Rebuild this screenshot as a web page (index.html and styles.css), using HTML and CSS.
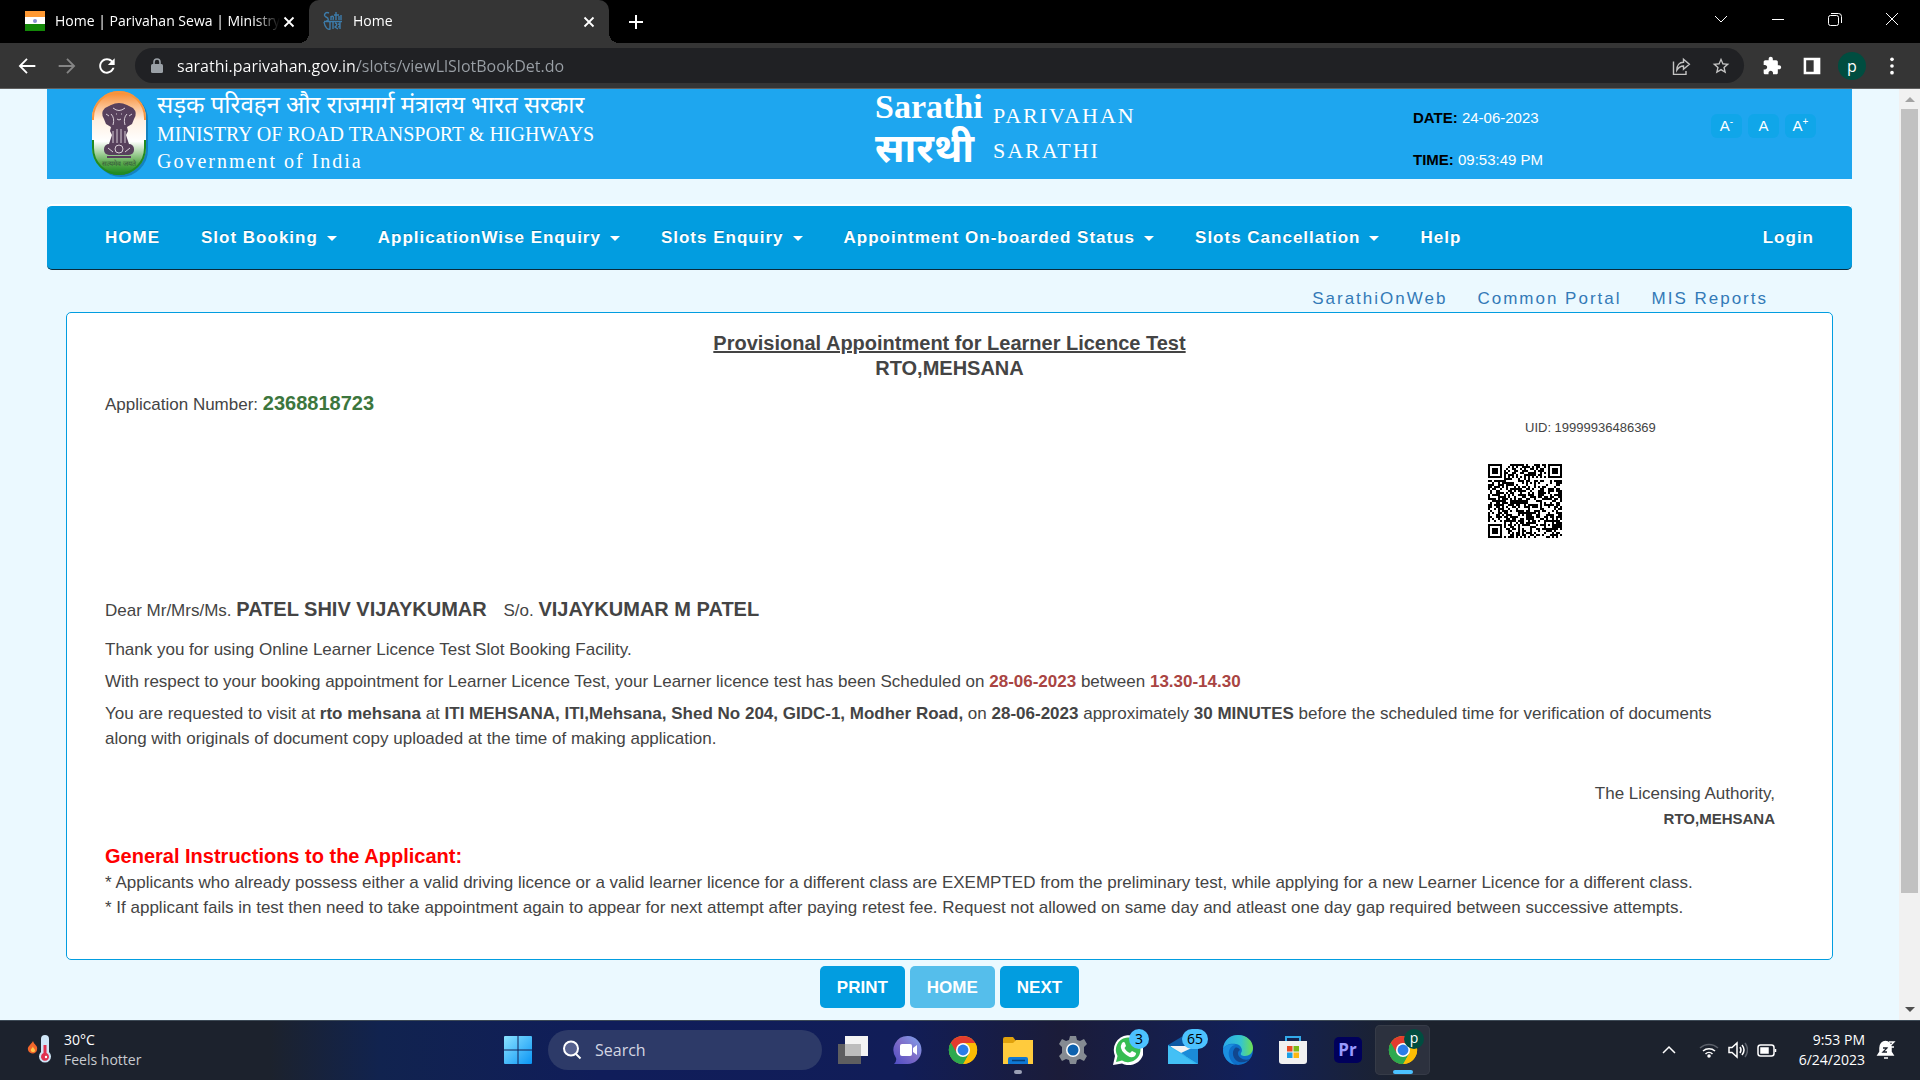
FILE: index.html
```html
<!DOCTYPE html>
<html lang="en">
<head>
<meta charset="utf-8">
<title>Home</title>
<link rel="stylesheet" href="styles.css">
</head>
<body>
<svg class="defs" aria-hidden="true">
  <symbol id="chrome" viewBox="0 0 32 32">
    <circle cx="16" cy="16" r="15" fill="#fbbc04"/>
    <path d="M16 16L3 8.500A15 15 0 0 1 29 8.500z" fill="#e33b2e"/>
    <path d="M3 8.500A15 15 0 0 0 16 31L22.500 19.500L16 16z" fill="#2da94f"/>
    <path d="M16 8.500h13A15 15 0 0 1 16 31l6.500-11z" fill="#fbbc04"/>
    <path d="M3 8.500L9.500 19.700L16 16V8.500z" fill="#e33b2e"/>
    <path d="M3 8.500A15 15 0 0 0 16 31L22.500 19.500A7.500 7.500 0 0 1 9.500 19.700z" fill="#2da94f"/>
    <circle cx="16" cy="16" r="7.500" fill="#fff"/>
    <circle cx="16" cy="16" r="5.800" fill="#2b7de9"/>
  </symbol>
  <symbol id="cross" viewBox="0 0 12 12"><path d="M1.500 1.500l9 9M10.500 1.500l-9 9" fill="none" stroke="currentColor" stroke-width="1.800"/></symbol>
</svg>

<header class="browser">
  <div class="tabs">
    <div class="tab">
      <svg class="favicon" viewBox="0 0 20 20"><path fill="#ff9933" d="M0 0h20v7H0z"/><path fill="#fff" d="M0 6h20v8H0z"/><path fill="#138808" d="M0 13h20v7H0z"/><circle cx="10" cy="10" r="2" fill="#8a8fd0"/></svg>
      <span class="tab-title">Home | Parivahan Sewa | Ministry</span>
      <button class="tab-close" aria-label="Close tab"><svg><use href="#cross"/></svg></button>
    </div>
    <div class="tab active">
      <svg class="favicon" viewBox="0 0 20 20" fill="none" stroke="#3d7cab" stroke-width="1.400"><path d="M6 2C2 0 0 5 3 6s3 4 0 4M8 5v4M8 6c2-2 3 0 2 3M13 1v8M11 4h5M16 5v4M18 4v5M1 11c1 6 4 8 6 7V11M1 10.500h18M10 11v7M12 12c4 1 0 4 0 4l3 2M17 11v7M15 13c3 0 2 3 0 3"/></svg>
      <span class="tab-title">Home</span>
      <button class="tab-close" aria-label="Close tab"><svg><use href="#cross"/></svg></button>
    </div>
    <button class="new-tab" aria-label="New tab"><svg viewBox="0 0 16 16"><path d="M8 1v14M1 8h14" stroke="#fff" stroke-width="2"/></svg></button>
    <div class="window-controls">
      <button aria-label="Search tabs"><svg viewBox="0 0 16 16"><path d="M2 5l6 6 6-6"/></svg></button>
      <button aria-label="Minimize"><svg viewBox="0 0 16 16"><path d="M2 8.500h12"/></svg></button>
      <button aria-label="Restore"><svg viewBox="0 0 16 16"><rect x="1.500" y="4.500" width="10" height="10" rx="2"/><path d="M4 2.500h7.500a3 3 0 0 1 3 3V12"/></svg></button>
      <button aria-label="Close"><svg viewBox="0 0 16 16"><path d="M2 2l12 12M14 2L2 14"/></svg></button>
    </div>
  </div>
  <div class="toolbar">
    <button class="tool" aria-label="Back"><svg viewBox="0 0 24 24"><path d="M22 12H4M12 3.500L3.500 12l8.500 8.500" fill="none" stroke="#fff" stroke-width="2.200"/></svg></button>
    <button class="tool" aria-label="Forward"><svg viewBox="0 0 24 24"><path d="M2 12h18M12 3.500L20.500 12 12 20.500" fill="none" stroke="#858585" stroke-width="2.200"/></svg></button>
    <button class="tool" aria-label="Reload"><svg viewBox="0 0 24 24"><path fill="#fff" d="M17.650 6.350C16.200 4.900 14.210 4 12 4c-4.420 0-7.990 3.580-7.990 8s3.570 8 7.990 8c3.730 0 6.840-2.550 7.730-6h-2.080c-.82 2.330-3.040 4-5.650 4-3.310 0-6-2.690-6-6s2.690-6 6-6c1.660 0 3.140.69 4.220 1.780L13 11h7V4l-2.350 2.350z" transform="translate(-2 -2) scale(1.160)"/></svg></button>
    <div class="omnibox">
      <svg class="lock" viewBox="0 0 12 16"><rect y="6" width="12" height="9" rx="1.500" fill="#9aa0a6"/><path d="M3 7V4a3 3 0 0 1 6 0v3" fill="none" stroke="#9aa0a6" stroke-width="1.600"/></svg>
      <input class="url" type="text" aria-label="Address" value="sarathi.parivahan.gov.in/slots/viewLlSlotBookDet.do">
      <button class="tool" aria-label="Share"><svg viewBox="0 0 24 24" fill="none" stroke="#c4c4c4" stroke-width="1.700"><path d="M3 6.500V22h15v-4M7 17c0-6 3-9.500 8-9.500V4l7 6-7 6v-4c-4 0-6 1.500-8 5z"/></svg></button>
      <button class="tool" aria-label="Bookmark"><svg viewBox="0 0 24 24"><path fill="#c4c4c4" d="M22 9.240l-7.190-.62L12 2 9.190 8.630 2 9.240l5.460 4.730L5.820 21 12 17.270 18.180 21l-1.630-7.030L22 9.240zM12 15.400l-3.760 2.270 1-4.280-3.320-2.880 4.380-.38L12 6.100l1.710 4.040 4.380.38-3.320 2.880 1 4.280L12 15.400z"/></svg></button>
    </div>
    <button class="tool" aria-label="Extensions"><svg viewBox="0 0 24 24"><path fill="#fff" d="M20.500 11H19V7c0-1.100-.9-2-2-2h-4V3.500C13 2.120 11.880 1 10.500 1S8 2.120 8 3.500V5H4c-1.100 0-1.990.9-1.990 2v3.800H3.500c1.490 0 2.700 1.210 2.700 2.700s-1.210 2.700-2.700 2.700H2V20c0 1.100.9 2 2 2h3.800v-1.500c0-1.490 1.210-2.700 2.700-2.700 1.490 0 2.700 1.210 2.700 2.700V22H17c1.100 0 2-.9 2-2v-4h1.500c1.380 0 2.500-1.120 2.500-2.500S21.880 11 20.500 11z"/></svg></button>
    <button class="tool" aria-label="Side panel"><svg viewBox="0 0 24 24"><path fill="#fff" fill-rule="evenodd" d="M2 2h20v20H2zM5 5v14h9V5z"/></svg></button>
    <button class="tool avatar" aria-label="Profile">p</button>
    <button class="tool" aria-label="Menu"><svg viewBox="0 0 24 24" fill="#fff"><circle cx="12" cy="4" r="2.200"/><circle cx="12" cy="12" r="2.200"/><circle cx="12" cy="20" r="2.200"/></svg></button>
  </div>
</header>

<div class="viewport">
  <div class="page">
    <div class="banner">
      <div class="ministry">
        <svg class="emblem" viewBox="0 0 58 88">
          <defs><linearGradient id="tri" x1="0" y1="0" x2="0" y2="1"><stop offset="0" stop-color="#f7872a"/><stop offset=".35" stop-color="#fff0e2"/><stop offset=".6" stop-color="#fff"/><stop offset=".85" stop-color="#5dac50"/><stop offset="1" stop-color="#17851c"/></linearGradient></defs>
          <rect x="3" y="3" width="54" height="84" rx="27" fill="#0c5d8e" opacity=".5"/>
          <rect x="1" y="1" width="54" height="84" rx="27" fill="url(#tri)"/>
          <path d="M2 30V28a26 26 0 0 1 52 0v2" fill="none" stroke="#f7953e" stroke-width="2"/>
          <path d="M2 50v8a26 26 0 0 0 52 0v-8" fill="none" stroke="#228b22" stroke-width="2"/>
          <g fill="#57405c"><path d="M20 15q8-4 16 0l6 3q5 5 1 11l-2 5-5 3 1 4-2 4 3 9H18l3-9-2-4 1-4-5-3-2-5q-4-6 1-11z"/><rect x="13" y="54" width="30" height="11" rx="5"/><path d="M16 66h24v2H16z"/></g>
          <g fill="none" stroke="#d8cdd7" stroke-width="1"><path d="M22 18q6 5 12 0M20 24q4 4 2 11M36 24q-4 4-2 11M25 24h1M30 24h1M26 29q2 2 4 0M15 24l3 2M41 24l-3 2M22 41v12M26 39v14M30 39v14M34 41v12M17 58l5 4M34 62l5-4"/><circle cx="28" cy="59" r="4"/></g>
          <text x="28" y="76" font-size="7" text-anchor="middle" fill="#37523b">सत्यमेव जयते</text>
        </svg>
        <div class="ministry-text">
          <p class="hindi" lang="hi">सड़क परिवहन और राजमार्ग मंत्रालय भारत सरकार</p>
          <p>MINISTRY OF ROAD TRANSPORT &amp; HIGHWAYS</p>
          <p class="government">Government of India</p>
        </div>
      </div>
      <div class="sarathi">
        <div class="wordmark"><span>Sarathi</span><span class="wordmark-hindi" lang="hi">सारथी</span></div>
        <p class="product">PARIVAHAN<br>SARATHI</p>
      </div>
      <div class="clock">
        <p><b>DATE:</b> 24-06-2023</p>
        <p><b>TIME:</b> 09:53:49 PM</p>
      </div>
      <div class="text-size">
        <button aria-label="Smaller text">A<sup>-</sup></button>
        <button aria-label="Normal text">A</button>
        <button aria-label="Larger text">A<sup>+</sup></button>
      </div>
    </div>

    <nav class="menu">
      <a href="#">HOME</a>
      <a href="#" class="drop">Slot Booking</a>
      <a href="#" class="drop">ApplicationWise Enquiry</a>
      <a href="#" class="drop">Slots Enquiry</a>
      <a href="#" class="drop">Appointment On-boarded Status</a>
      <a href="#" class="drop">Slots Cancellation</a>
      <a href="#">Help</a>
      <a href="#" class="login">Login</a>
    </nav>

    <div class="portal-links">
      <a href="#">SarathiOnWeb</a>
      <a href="#">Common Portal</a>
      <a href="#">MIS Reports</a>
    </div>

    <main class="letter">
      <h1><u>Provisional Appointment for Learner Licence Test</u><br>RTO,MEHSANA</h1>
      <p class="application">Application Number: <strong>2368818723</strong></p>
      <div class="identity">
        <p class="uid">UID: 19999936486369</p>
        <svg class="qr" viewBox="0 0 37 37" role="img" aria-label="QR code" shape-rendering="crispEdges"><path id="qr-cells"/></svg>
      </div>
      <p class="salutation">Dear Mr/Mrs/Ms. <strong>PATEL SHIV VIJAYKUMAR</strong> <span class="parent">S/o. <strong>VIJAYKUMAR M PATEL</strong></span></p>
      <p>Thank you for using Online Learner Licence Test Slot Booking Facility.</p>
      <p>With respect to your booking appointment for Learner Licence Test, your Learner licence test has been Scheduled on <b class="slot">28-06-2023</b> between <b class="slot">13.30-14.30</b></p>
      <p>You are requested to visit at <b>rto mehsana</b> at <b>ITI MEHSANA, ITI,Mehsana, Shed No 204, GIDC-1, Modher Road,</b> on <b>28-06-2023</b> approximately <b>30 MINUTES</b> before the scheduled time for verification of documents<br>along with originals of document copy uploaded at the time of making application.</p>
      <p class="signature">The Licensing Authority,<br><b>RTO,MEHSANA</b></p>
      <h2>General Instructions to the Applicant:</h2>
      <p class="rules">* Applicants who already possess either a valid driving licence or a valid learner licence for a different class are EXEMPTED from the preliminary test, while applying for a new Learner Licence for a different class.<br>* If applicant fails in test then need to take appointment again to appear for next attempt after paying retest fee. Request not allowed on same day and atleast one day gap required between successive attempts.</p>
    </main>

    <div class="actions">
      <button>PRINT</button>
      <button class="hovered">HOME</button>
      <button>NEXT</button>
    </div>
  </div>
  <div class="scrollbar" aria-hidden="true">
    <i class="up"></i>
    <div class="track"><div class="thumb"></div></div>
    <i class="down"></i>
  </div>
</div>

<footer class="taskbar">
  <div class="weather">
    <svg viewBox="0 0 26 30"><path d="M6 7c-1 3-6 5-5 9s8 5 9 0-3-5-4-9z" fill="#f2662b"/><path d="M6 12c0 2-3 3-2 5s5 1 4-1-2-2-2-4z" fill="#ffc64a"/><path d="M14 5a4 4 0 0 1 8 0v13a6 6 0 1 1-8 0z" fill="#cfe6f7"/><path d="M16.500 11h3v8a4 4 0 1 1-3 0z" fill="#e0314f"/><circle cx="19" cy="23" r="1.200" fill="#fff"/></svg>
    <p>30°C<br><span>Feels hotter</span></p>
  </div>
  <div class="apps">
    <button class="app" aria-label="Start"><svg viewBox="0 0 30 30"><defs><linearGradient id="win" x1="0" y1="0" x2="1" y2="1"><stop offset="0" stop-color="#8be2ff"/><stop offset="1" stop-color="#0a95f5"/></linearGradient></defs><path fill="url(#win)" d="M1 2q0-1 1-1h12.500v13.500H1zM15.500 1H28q1 0 1 1v12.500H15.500zM1 15.500h13.500V29H2q-1 0-1-1zM15.500 15.500H29V28q0 1-1 1H15.500z"/></svg></button>
    <div class="search">
      <svg viewBox="0 0 20 20" fill="#56618f" stroke="#fff" stroke-width="2"><circle cx="9" cy="8.500" r="7"/><path d="M14 14l4.500 4.500"/></svg>
      <input type="search" placeholder="Search" aria-label="Search">
    </div>
    <button class="app" aria-label="Task view"><svg viewBox="0 0 30 30"><path fill="#5e5e60" d="M0 9h23v20H0z"/><path fill="#f3f3f3" d="M7 1h23v20H7z"/><path fill="#bdbdbd" d="M7 9h16v12H7z"/></svg></button>
    <button class="app" aria-label="Chat"><svg viewBox="0 0 30 30"><defs><linearGradient id="chat" x1="1" y1="0" x2="0" y2="1"><stop offset="0" stop-color="#7fa6f0"/><stop offset=".5" stop-color="#7f6cc8"/><stop offset="1" stop-color="#4d4cc4"/></linearGradient></defs><path fill="url(#chat)" d="M15 1a14 14 0 1 1-1 28H1q3-3 2-6A14 14 0 0 1 15 1z"/><rect x="7" y="9" width="12" height="12" rx="2" fill="#fff"/><path d="M20 13l4-3v10l-4-3z" fill="#fff"/></svg></button>
    <button class="app" aria-label="Chrome"><svg><use href="#chrome"/></svg></button>
    <button class="app open" aria-label="File Explorer"><svg viewBox="0 0 30 30"><path fill="#e0a10c" d="M0 4q0-2 2-2h8l3 4v6H0z"/><path fill="#ffcb3d" d="M0 8h10l3-3h17v24H0z"/><path fill="#0f78d4" d="M5 29v-5q0-2 2-2h16q2 0 2 2v5z"/><path stroke="#063e75" stroke-width="1.500" d="M9 25.500h13"/></svg></button>
    <button class="app" aria-label="Settings"><svg viewBox="0 0 30 30"><path d="M12 1h6l1 4 3 1 4-2 3 5-3 3v6l3 3-3 5-4-2-3 1-1 4h-6l-1-4-3-1-4 2-3-5 3-3v-6L1 9l3-5 4 2 3-1z" fill="#858b92"/><circle cx="15" cy="15" r="7" fill="#fff"/><circle cx="15" cy="15" r="5.500" fill="#0d62ae"/></svg></button>
    <button class="app" aria-label="WhatsApp"><svg viewBox="0 0 30 30"><path fill="#fff" d="M0 30l2-9A15 15 0 1 1 9 28.500z"/><path fill="#37bd52" d="M3 27l1.500-6A12.300 12.300 0 1 1 9 25.500z"/><path fill="#fff" d="M9 8q2-2 3 0l1 3-1.500 2q2 4 5.500 5l2-2 4 2q0 3-3 4-4 1-9-4T9 8z"/></svg><span class="badge">3</span></button>
    <button class="app" aria-label="Mail"><svg viewBox="0 0 30 30"><path fill="#0c59a4" d="M0 10L15 1l15 9v6H0z"/><path fill="#f2f2f2" d="M2 11h26L15 23z"/><path fill="#35b8f1" d="M0 10l30 18v1H0z"/><path fill="#1b8bd8" d="M30 10v19L13 18z"/><path fill="#43c0f5" d="M0 11v18h27L13 19z"/></svg><span class="badge wide">65</span></button>
    <button class="app" aria-label="Edge"><svg viewBox="0 0 30 30"><defs><linearGradient id="edge"><stop offset="0" stop-color="#2aa8e8"/><stop offset=".6" stop-color="#35c5cf"/><stop offset="1" stop-color="#6fe04f"/></linearGradient></defs><circle cx="15" cy="15" r="15" fill="#0e6fc9"/><path fill="url(#edge)" d="M0 14C1 4 8 0 15 0c9 0 15 6 15 13 0 5-4 8-8 8-3 0-5-1-4-3 2-2 1-8-5-9C7 8 2 10 0 14z"/><path fill="#11478f" d="M12 13c-4 4-2 12 4 14 5 1 9-1 11-3-6 2-12-1-12-6 0-2 2-3 2-3-1-2-3-3-5-2z"/><path fill="#1b8fe0" d="M0 14c2-4 8-6 13-4-6 0-8 6-7 11 1 4 4 8 7 9C5 29 0 22 0 14z"/></svg></button>
    <button class="app" aria-label="Microsoft Store"><svg viewBox="0 0 30 30"><path d="M8 7V2h14v5" fill="none" stroke="#32a9ea" stroke-width="2"/><path fill="#f1f1f1" d="M1 6h28v20q0 3-3 3H4q-3 0-3-3z"/><path fill="#e84b25" d="M9 11h5.500v5.500H9z"/><path fill="#7db817" d="M15.500 11H21v5.500h-5.500z"/><path fill="#1a9fe6" d="M9 17.500h5.500V23H9z"/><path fill="#fcb813" d="M15.500 17.500H21V23h-5.500z"/></svg></button>
    <button class="app" aria-label="Premiere Pro"><span class="premiere">Pr</span></button>
    <button class="app current" aria-label="Chrome, profile p"><svg><use href="#chrome"/></svg><span class="badge profile">p</span></button>
  </div>
  <div class="tray">
    <svg class="chevron" viewBox="0 0 20 20"><path d="M4 13l6-6 6 6"/></svg>
    <svg viewBox="0 0 20 20"><path d="M1 8a13 13 0 0 1 18 0" stroke="#5b606a"/><path d="M4 11a9 9 0 0 1 12 0M6.500 14a5 5 0 0 1 7 0"/><circle cx="10" cy="16" r="1" fill="#fff"/></svg>
    <svg viewBox="0 0 20 20"><path d="M1 7.500h3L9 3v14l-5-4.500H1zM12 7q2 3 0 6M14 5q4 5 0 10"/><path d="M17 3q5 7 0 14" stroke="#5b606a"/></svg>
    <svg viewBox="0 0 20 20"><rect x="1" y="5" width="16" height="11" rx="2.500"/><path d="M4 8h7v5H4z" fill="#fff"/><path d="M18.500 9v3"/></svg>
    <p class="time">9:53 PM<br>6/24/2023</p>
    <svg viewBox="0 0 20 20"><path d="M2 15h15l-2-3V8A5 6 0 0 0 4 8v4z" fill="#fff"/><path d="M8 18h4" /><path d="M7 8h4l-4 4h4" stroke="#1c222d" stroke-width="1.300"/><path d="M13 2h5l-5 5h5" stroke="#fff" stroke-width="1.300"/></svg>
  </div>
</footer>
<script src="qr.js"></script>
</body>
</html>
```
FILE: styles.css
```css
* { box-sizing: border-box; }
body { margin: 0; min-height: 100vh; display: flex; flex-direction: column; background: #ebf9ff; font-family: "Liberation Sans", Arial, sans-serif; font-size: 17px; line-height: 25px; color: #444; }
p, h1, h2 { margin: 0; }
a { text-decoration: none; }
button { font: inherit; color: inherit; background: none; border: 0; padding: 0; }
input { font: inherit; color: inherit; background: none; border: 0; padding: 0; min-width: 0; outline: 0; }
svg { display: block; flex: none; }
.defs { position: absolute; width: 0; height: 0; }

/* Browser window */
.browser, .taskbar { font-family: "Open Sans", "Noto Sans", sans-serif; color: #fff; }
.browser { background: #353535; border-bottom: 1px solid #606060; }
.tabs { display: flex; height: 43px; background: #000; }
.tab { display: flex; align-items: center; width: 309px; padding: 0 12px 8px 25px; font-size: 14px; }
.tab.active { position: relative; width: 300px; padding-left: 14px; background: #353535; border-radius: 10px 10px 0 0; }
.tab.active::before, .tab.active::after { content: ""; position: absolute; bottom: 0; width: 10px; height: 10px; }
.tab.active::before { left: -10px; background: radial-gradient(circle at 0 0, transparent 10px, #353535 10px); }
.tab.active::after { right: -10px; background: radial-gradient(circle at 100% 0, transparent 10px, #353535 10px); }
.favicon { width: 20px; height: 20px; margin-top: 6px; }
.tab-title { flex: 1; margin: 6px 1px 0 10px; overflow: hidden; white-space: nowrap; mask-image: linear-gradient(to left, transparent, #000 26px); }
.tab-close { width: 16px; height: 16px; padding: 2px; margin-top: 8px; }
.tab-close svg { width: 12px; height: 12px; }
.new-tab { width: 32px; padding: 0 8px; margin-left: 11px; }
.new-tab svg { width: 16px; height: 16px; }
.window-controls { display: flex; margin-left: auto; }
.window-controls button { width: 57px; display: grid; place-items: center; padding-bottom: 5px; }
.window-controls svg { width: 16px; height: 16px; fill: none; stroke: #fff; stroke-width: 1; }
.toolbar { display: flex; align-items: center; height: 45px; padding: 0 8px 0 7px; }
.tool { width: 40px; height: 34px; display: grid; place-items: center; flex: none; }
.tool svg { width: 20px; height: 20px; }
.omnibox { flex: 1; display: flex; align-items: center; height: 35px; margin: 0 8px; padding: 0 3px 0 16px; border-radius: 18px; background: #202124; }
.lock { width: 12px; height: 16px; margin: 0 10px 0 0; }
.url { flex: 1; margin-left: 4px; height: 26px; font-size: 16px; color: transparent; background: linear-gradient(to right, #fff 181px, #9aa0a6 181px); -webkit-background-clip: text; background-clip: text; }
.tool.avatar { width: 28px; height: 28px; margin: 0 6px; border-radius: 50%; background: #004d40; font-size: 16px; line-height: 22px; }

/* Page */
.viewport { flex: 1; display: flex; }
.page { flex: 1; padding: 0 47px; }
.banner { display: grid; grid-template-columns: 828px 538px 298px 1fr; height: 90px; background: #1ea6ef; color: #fff; }
.ministry { display: flex; padding: 1px 0 0 44px; gap: 8px; font-family: "Liberation Serif", "Times New Roman", serif; font-size: 20px; line-height: 27px; white-space: nowrap; }
.emblem { width: 58px; height: 88px; }
.ministry-text { padding-top: 4px; }
.hindi { font-family: "Noto Sans Devanagari", "Noto Sans", sans-serif; font-size: 24px; }
.government { letter-spacing: 2px; }
.sarathi { display: flex; gap: 11px; font-family: "Liberation Serif", "Times New Roman", serif; }
.wordmark { width: 107px; display: flex; flex-direction: column; font-size: 34px; font-weight: bold; line-height: 36px; }
.wordmark-hindi { font-family: "Noto Sans Devanagari", "Noto Sans", sans-serif; font-size: 40px; line-height: 54px; }
.product { padding-top: 9px; font-size: 22px; line-height: 35px; letter-spacing: 2px; }
.clock { padding-top: 8px; font-size: 15px; line-height: 42px; }
.clock b { color: #000; }
.text-size { display: flex; gap: 6px; padding-top: 25px; }
.text-size button { width: 31px; height: 24px; border-radius: 6px; background: #10a6e9; font-size: 15px; line-height: 24px; }
.text-size sup { font-size: 10px; line-height: 0; }

.menu { display: flex; align-items: center; gap: 41px; height: 66px; margin-top: 25px; padding: 0 38px 0 58px; border-top: 2px solid #fff; border-bottom: 1px solid #0a2a3a; border-radius: 5px; background: #029de0; }
.menu a { color: #fff; font-weight: bold; letter-spacing: 1px; white-space: nowrap; text-shadow: 0 -1px 0 rgba(0, 0, 0, .25); }
.drop::after { content: ""; display: inline-block; margin-left: 9px; vertical-align: 2px; border: 5px solid transparent; border-top-color: #fff; border-bottom: 0; }
.menu .login { margin-left: auto; }

.portal-links { display: flex; justify-content: flex-end; gap: 30px; padding: 16px 84px 1px 0; }
.portal-links a { color: #337ab7; letter-spacing: 2px; }

.letter { margin: 0 19px; padding: 18px 57px 39px 38px; border: 1px solid #029de0; border-radius: 5px; background: #fff; }
.letter p { margin-bottom: 7px; }
h1 { margin-right: -19px; font-size: 20px; line-height: 25px; text-align: center; }
.letter strong { font-size: 20px; }
.letter .application { margin: 10px 0 0; }
.application strong { color: #3c763d; }
.identity { display: flex; flex-direction: column; width: 287px; height: 180px; margin-left: auto; }
.letter .uid { margin: 0 0 25px 37px; font-size: 13px; line-height: 22px; }
.qr { width: 74px; height: 74px; }
.letter .salutation { margin-bottom: 14px; }
.parent { margin-left: 12px; }
.slot { color: #a94442; }
.letter .signature { margin: 30px 0 12px; text-align: right; }
.signature b { font-size: 15px; }
h2 { font-size: 20px; line-height: 27px; color: #f00; }
.letter .rules { margin-bottom: 0; }

.actions { display: flex; justify-content: center; gap: 5px; padding: 6px 0 10px; }
.actions button { height: 42px; padding: 0 17px; border-radius: 5px; background: #029de0; color: #fff; font-weight: bold; }
.actions .hovered { background: #55beeb; }

.scrollbar { width: 21px; display: flex; flex-direction: column; align-items: center; padding: 8px 0; background: #f1f1f1; }
.track { flex: 1; width: 17px; margin: 7px 0; }
.thumb { height: 88%; background: #c1c1c1; }
.up, .down { border: 5px solid transparent; }
.up { border-top: 0; border-bottom-color: #a3a3a3; }
.down { border-bottom: 0; border-top-color: #505050; }

/* Taskbar */
.taskbar { display: grid; grid-template-columns: 1fr auto 1fr; align-items: center; height: 60px; padding-bottom: 1px; border-top: 1px solid #3d4a56; font-size: 14px; line-height: 20px; background: linear-gradient(to right, #1c222d 270px, #11234f 380px, #101d5a 600px, #111d58 900px, #1b1c39 1060px, #11205a 1250px, #1c222d 1400px); }
.weather { display: flex; gap: 11px; padding-left: 27px; }
.weather svg { width: 26px; height: 30px; margin-top: 4px; }
.weather span { color: #c8cbd0; }
.apps { display: flex; align-items: center; }
.app { position: relative; display: grid; place-items: center; width: 55px; height: 50px; border-radius: 5px; }
.app svg { width: 30px; height: 30px; }
.current { background: #2c313e; box-shadow: inset 0 0 0 1px #363b47; }
.open::after, .current::after { content: ""; position: absolute; bottom: 1px; left: 50%; width: 8px; height: 4px; margin-left: -4px; border-radius: 2px; background: #9ba0b5; }
.current::after { width: 20px; margin-left: -10px; background: #4cc2ff; }
.badge { position: absolute; top: 4px; right: 6px; width: 20px; height: 20px; border-radius: 10px; background: #4cc2ff; color: #000; line-height: 20px; }
.badge.wide { right: 2px; width: 26px; }
.badge.profile { background: #004d40; color: #fff; line-height: 18px; }
.premiere { width: 28px; height: 26px; border-radius: 5px; background: #00005b; color: #9999ff; font-size: 17px; font-weight: bold; line-height: 26px; }
.search { display: flex; align-items: center; gap: 13px; width: 274px; height: 40px; margin: 0 3px; padding: 0 14px; border-radius: 20px; background: #2d3a68; }
.search svg { width: 20px; height: 20px; }
.search input { flex: 1; font-size: 16px; }
.search input::placeholder { color: #d3d6e2; }
.tray { display: flex; justify-content: flex-end; align-items: center; gap: 9px; padding-right: 24px; }
.tray svg { width: 20px; height: 20px; fill: none; stroke: #fff; stroke-width: 1.5; }
.tray .chevron { margin-right: 11px; }
.time { margin: 0 2px 0 13px; text-align: right; }
```
FILE: qr.js
```js
// Fills the 37 by 37 code: three finder squares, one alignment square, timing lines, data cells.
const SIZE = 37;
let seed = 236881;
const bit = () => {
  seed = (seed * 1103515245 + 12345) % 2147483648;
  return seed / 2147483648 < 0.52;
};
const ring = (x, y, cx, cy) => Math.max(Math.abs(x - cx), Math.abs(y - cy));
const finders = [[3, 3], [SIZE - 4, 3], [3, SIZE - 4]];
let d = "";
for (let y = 0; y < SIZE; y++) {
  for (let x = 0; x < SIZE; x++) {
    let on = bit();
    if (x === 6 || y === 6) on = (x + y) % 2 === 0;
    const a = ring(x, y, 30, 30);
    if (a < 3) on = a !== 1;
    for (const [cx, cy] of finders) {
      const r = ring(x, y, cx, cy);
      if (r < 5) on = r < 2 || r === 3;
    }
    if (on) d += `M${x} ${y}h1v1h-1z`;
  }
}
document.getElementById("qr-cells").setAttribute("d", d);
```
